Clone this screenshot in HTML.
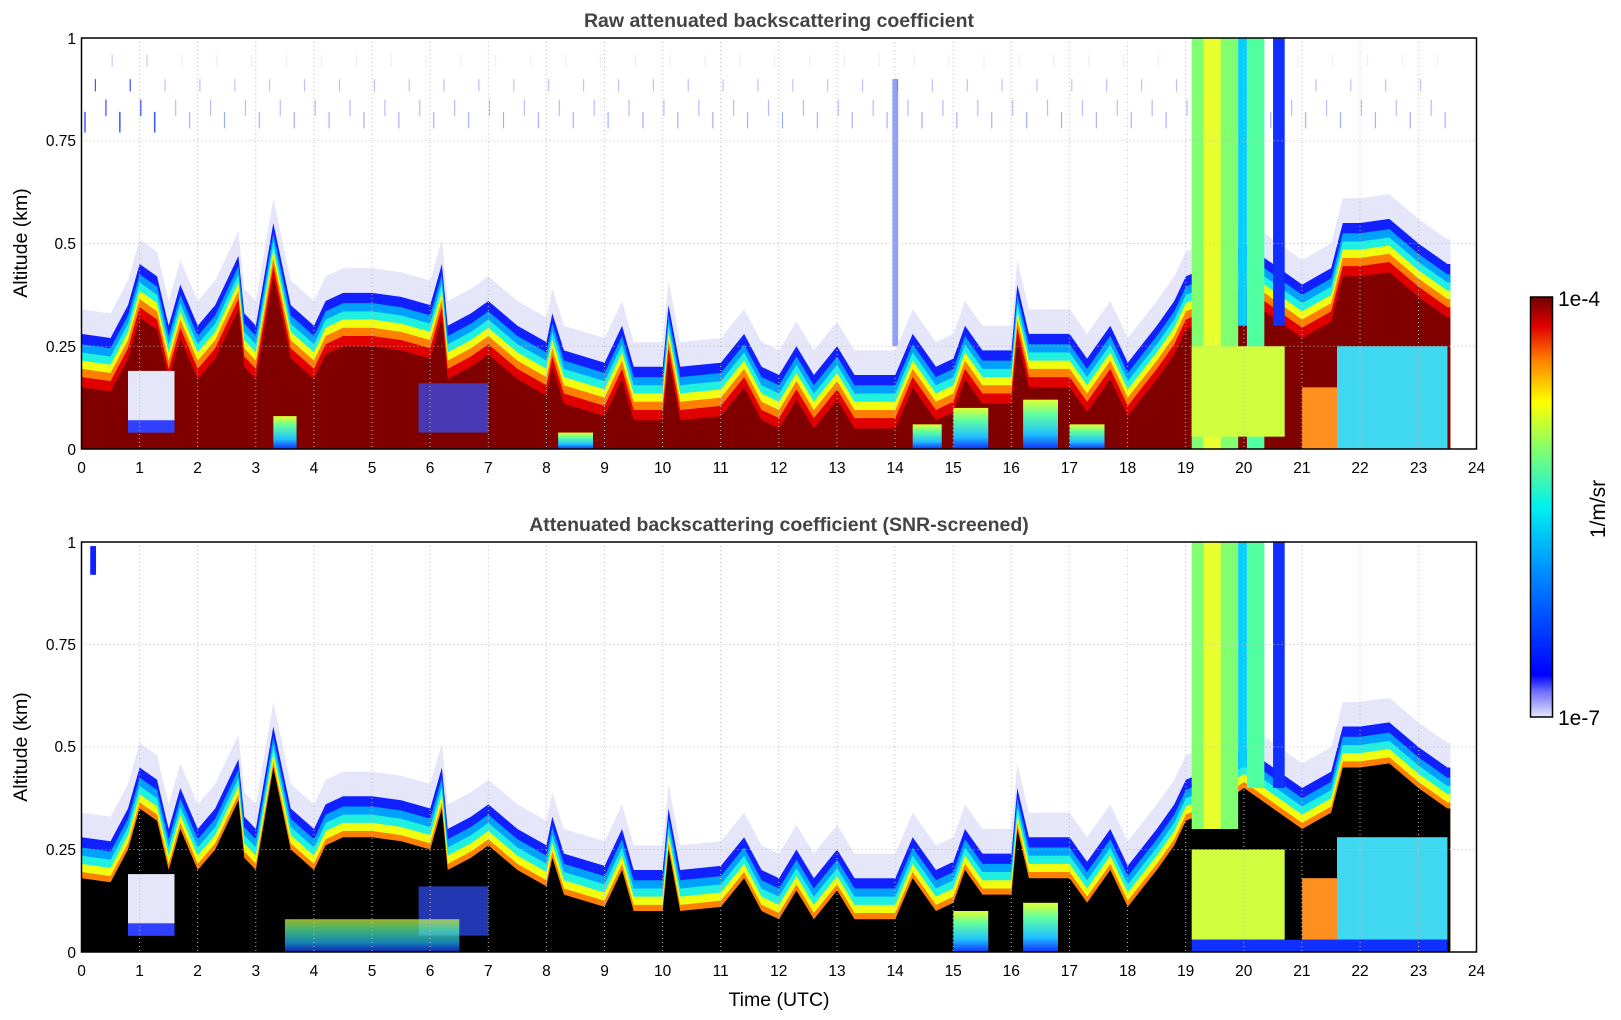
<!DOCTYPE html>
<html><head><meta charset="utf-8"><style>
html,body{margin:0;padding:0;background:#fff;overflow:hidden;width:1621px;height:1020px;}
svg{display:block;}
svg text{font-family:"Liberation Sans","DejaVu Sans",sans-serif;}
</style></head><body>
<svg width="1621" height="1020" xmlns="http://www.w3.org/2000/svg">
<defs>
<path id="prof" d="M0,-1 L0,0.28 L0.5,0.27 L0.8,0.35 L1,0.45 L1.3,0.42 L1.5,0.3 L1.7,0.4 L2,0.3 L2.3,0.35 L2.7,0.47 L2.8,0.33 L3,0.3 L3.3,0.55 L3.6,0.35 L4,0.3 L4.2,0.36 L4.5,0.38 L5,0.38 L5.5,0.37 L6,0.35 L6.2,0.45 L6.3,0.3 L6.7,0.33 L7,0.36 L7.5,0.3 L8,0.26 L8.1,0.33 L8.3,0.24 L9,0.21 L9.3,0.3 L9.5,0.2 L10,0.2 L10.1,0.35 L10.3,0.2 L11,0.21 L11.4,0.28 L11.7,0.2 L12,0.18 L12.3,0.25 L12.6,0.18 L13,0.25 L13.3,0.18 L14,0.18 L14.3,0.28 L14.7,0.2 L15,0.22 L15.2,0.3 L15.5,0.24 L16,0.24 L16.1,0.4 L16.3,0.28 L17,0.28 L17.3,0.22 L17.7,0.3 L18,0.21 L18.5,0.3 L18.8,0.36 L19,0.42 L19.5,0.45 L20,0.5 L20.5,0.45 L21,0.4 L21.5,0.44 L21.7,0.55 L22,0.55 L22.5,0.56 L23,0.5 L23.5,0.45 L23.55,0.45 L23.55,-1 Z"/>
<linearGradient id="cb" x1="0" y1="1" x2="0" y2="0">
<stop offset="0" stop-color="#e6e6fa"/><stop offset="0.06" stop-color="#7070ff"/><stop offset="0.1" stop-color="#0000ff"/>
<stop offset="0.35" stop-color="#0090ff"/><stop offset="0.5" stop-color="#00f0f0"/><stop offset="0.65" stop-color="#90ff60"/>
<stop offset="0.75" stop-color="#ffff00"/><stop offset="0.85" stop-color="#ff8000"/><stop offset="0.93" stop-color="#e00000"/><stop offset="1" stop-color="#700000"/>
</linearGradient>
<linearGradient id="bot" x1="0" y1="0" x2="0" y2="1">
<stop offset="0" stop-color="#1030ff"/><stop offset="0.3" stop-color="#20c0ff"/><stop offset="0.7" stop-color="#60ffa0"/><stop offset="1" stop-color="#e0ff30"/>
</linearGradient>
<pattern id="noise" width="0.6" height="0.25" patternUnits="userSpaceOnUse">
<rect x="0.05" y="0.02" width="0.02" height="0.05" fill="#1030ff"/>
<rect x="0.23" y="0.12" width="0.015" height="0.03" fill="#1030ff"/>
<rect x="0.41" y="0.06" width="0.02" height="0.04" fill="#4050ff"/>
<rect x="0.52" y="0.18" width="0.015" height="0.03" fill="#c0c0ff"/>
</pattern>
</defs>

<!-- TOP PLOT -->
<svg x="81.5" y="38" width="1395" height="411" viewBox="0 0 24 1" preserveAspectRatio="none" overflow="hidden">
<g transform="translate(0,1) scale(1,-1)">
<rect x="0" y="0.78" width="23.5" height="0.22" fill="url(#noise)" opacity="0.4"/>
<rect x="0" y="0.75" width="1.4" height="0.25" fill="url(#noise)"/>
<rect x="13.95" y="0.25" width="0.1" height="0.65" fill="#2040ff" opacity="0.5"/>
<use href="#prof" transform="translate(0,0.06)" fill="#e6e6fa"/>
<use href="#prof" fill="#1020ff"/>
<use href="#prof" transform="translate(0,-0.025)" fill="#00a0ff"/>
<use href="#prof" transform="translate(0,-0.045)" fill="#20f0e0"/>
<use href="#prof" transform="translate(0,-0.065)" fill="#f0ff10"/>
<use href="#prof" transform="translate(0,-0.085)" fill="#ff8000"/>
<use href="#prof" transform="translate(0,-0.105)" fill="#e00000"/>
<use href="#prof" transform="translate(0,-0.13)" fill="#800000"/>
<rect x="3.3" y="0" width="0.4" height="0.08" fill="url(#bot)"/>
<rect x="8.2" y="0" width="0.6" height="0.04" fill="url(#bot)"/>
<rect x="14.3" y="0" width="0.5" height="0.06" fill="url(#bot)"/>
<rect x="15" y="0" width="0.6" height="0.1" fill="url(#bot)"/>
<rect x="16.2" y="0" width="0.6" height="0.12" fill="url(#bot)"/>
<rect x="17" y="0" width="0.6" height="0.06" fill="url(#bot)"/>
<rect x="0.8" y="0.04" width="0.8" height="0.15" fill="#e6e6fa"/>
<rect x="0.8" y="0.04" width="0.8" height="0.03" fill="#3040ff"/>
<rect x="5.8" y="0.04" width="1.2" height="0.12" fill="#3050ff" opacity="0.7"/>
<rect x="19.1" y="0" width="0.8" height="1" fill="#80ff70"/>
<rect x="19.3" y="0" width="0.3" height="1" fill="#e8ff30"/>
<rect x="19.9" y="0.3" width="0.15" height="0.7" fill="#00d0ff"/>
<rect x="20.05" y="0" width="0.3" height="1" fill="#50ffa0"/>
<rect x="20.5" y="0.3" width="0.2" height="0.7" fill="#1030ff"/>
<rect x="19.1" y="0.03" width="1.6" height="0.22" fill="#d0ff40"/>
<rect x="21.6" y="0" width="1.9" height="0.25" fill="#40d8f0"/>
<rect x="21" y="0" width="0.6" height="0.15" fill="#ff9020"/>
</g>
</svg>

<!-- BOTTOM PLOT -->
<svg x="81.5" y="542" width="1395" height="410" viewBox="0 0 24 1" preserveAspectRatio="none" overflow="hidden">
<g transform="translate(0,1) scale(1,-1)">
<rect x="0.15" y="0.92" width="0.1" height="0.07" fill="#1020ff"/>
<use href="#prof" transform="translate(0,0.06)" fill="#e6e6fa"/>
<use href="#prof" fill="#1020ff"/>
<use href="#prof" transform="translate(0,-0.025)" fill="#00a0ff"/>
<use href="#prof" transform="translate(0,-0.045)" fill="#20f0e0"/>
<use href="#prof" transform="translate(0,-0.065)" fill="#f0ff10"/>
<use href="#prof" transform="translate(0,-0.085)" fill="#ff8000"/>
<use href="#prof" transform="translate(0,-0.1)" fill="#000"/>
<rect x="0.8" y="0.04" width="0.8" height="0.15" fill="#e6e6fa"/>
<rect x="0.8" y="0.04" width="0.8" height="0.03" fill="#3040ff"/>
<rect x="5.8" y="0.04" width="1.2" height="0.12" fill="#3050ff" opacity="0.7"/>
<rect x="3.5" y="0" width="3" height="0.08" fill="url(#bot)" opacity="0.7"/>
<rect x="15" y="0" width="0.6" height="0.1" fill="url(#bot)"/>
<rect x="16.2" y="0" width="0.6" height="0.12" fill="url(#bot)"/>
<rect x="19.1" y="0.3" width="0.8" height="0.7" fill="#80ff70"/>
<rect x="19.3" y="0.3" width="0.3" height="0.7" fill="#e8ff30"/>
<rect x="19.9" y="0.45" width="0.15" height="0.55" fill="#00d0ff"/>
<rect x="20.05" y="0.4" width="0.3" height="0.6" fill="#50ffa0"/>
<rect x="20.5" y="0.4" width="0.2" height="0.6" fill="#1030ff"/>
<rect x="19.1" y="0.03" width="1.6" height="0.22" fill="#d0ff40"/>
<rect x="21.6" y="0.03" width="1.9" height="0.25" fill="#40d8f0"/>
<rect x="21" y="0.03" width="0.6" height="0.15" fill="#ff9020"/>
<rect x="19.1" y="0" width="4.4" height="0.03" fill="#1030ff"/>
</g>
</svg>

<g stroke="#bbb" stroke-width="1" stroke-dasharray="1,3" fill="none">
<path d="M139.6,38V449M197.6,38V449M255.8,38V449M313.9,38V449M372,38V449M430.1,38V449M488.3,38V449M546.4,38V449M604.5,38V449M662.6,38V449M720.7,38V449M778.8,38V449M837,38V449M895.1,38V449M953.2,38V449M1011.3,38V449M1069.4,38V449M1127.6,38V449M1185.7,38V449M1243.8,38V449M1301.9,38V449M1360,38V449M1418.6,38V449"/>
<path d="M81.5,140.8H1476.5M81.5,243.5H1476.5M81.5,346.3H1476.5"/>
<path d="M139.6,542V952M197.6,542V952M255.8,542V952M313.9,542V952M372,542V952M430.1,542V952M488.3,542V952M546.4,542V952M604.5,542V952M662.6,542V952M720.7,542V952M778.8,542V952M837,542V952M895.1,542V952M953.2,542V952M1011.3,542V952M1069.4,542V952M1127.6,542V952M1185.7,542V952M1243.8,542V952M1301.9,542V952M1360,542V952M1418.6,542V952"/>
<path d="M81.5,644.5H1476.5M81.5,747H1476.5M81.5,849.5H1476.5"/>
</g>
<rect x="81.5" y="38" width="1395" height="411" fill="none" stroke="#000" stroke-width="1.5"/>
<rect x="81.5" y="542" width="1395" height="410" fill="none" stroke="#000" stroke-width="1.5"/>

<g font-size="15.5" fill="#000" text-anchor="middle">
<text x="81.5" y="473">0</text><text x="139.6" y="473">1</text><text x="197.6" y="473">2</text><text x="255.8" y="473">3</text><text x="313.9" y="473">4</text><text x="372" y="473">5</text><text x="430.1" y="473">6</text><text x="488.3" y="473">7</text><text x="546.4" y="473">8</text><text x="604.5" y="473">9</text><text x="662.6" y="473">10</text><text x="720.7" y="473">11</text><text x="778.8" y="473">12</text><text x="837" y="473">13</text><text x="895.1" y="473">14</text><text x="953.2" y="473">15</text><text x="1011.3" y="473">16</text><text x="1069.4" y="473">17</text><text x="1127.6" y="473">18</text><text x="1185.7" y="473">19</text><text x="1243.8" y="473">20</text><text x="1301.9" y="473">21</text><text x="1360" y="473">22</text><text x="1418.6" y="473">23</text><text x="1476.5" y="473">24</text>
<text x="81.5" y="976">0</text><text x="139.6" y="976">1</text><text x="197.6" y="976">2</text><text x="255.8" y="976">3</text><text x="313.9" y="976">4</text><text x="372" y="976">5</text><text x="430.1" y="976">6</text><text x="488.3" y="976">7</text><text x="546.4" y="976">8</text><text x="604.5" y="976">9</text><text x="662.6" y="976">10</text><text x="720.7" y="976">11</text><text x="778.8" y="976">12</text><text x="837" y="976">13</text><text x="895.1" y="976">14</text><text x="953.2" y="976">15</text><text x="1011.3" y="976">16</text><text x="1069.4" y="976">17</text><text x="1127.6" y="976">18</text><text x="1185.7" y="976">19</text><text x="1243.8" y="976">20</text><text x="1301.9" y="976">21</text><text x="1360" y="976">22</text><text x="1418.6" y="976">23</text><text x="1476.5" y="976">24</text>
</g>
<g font-size="15.5" fill="#000" text-anchor="end">
<text x="76" y="44">1</text><text x="76" y="146">0.75</text><text x="76" y="249">0.5</text><text x="76" y="352">0.25</text><text x="76" y="455">0</text>
<text x="76" y="548">1</text><text x="76" y="650">0.75</text><text x="76" y="752">0.5</text><text x="76" y="855">0.25</text><text x="76" y="958">0</text>
</g>
<g font-size="19.5" font-weight="bold" fill="#444" text-anchor="middle">
<text x="779" y="27">Raw attenuated backscattering coefficient</text>
<text x="779" y="531">Attenuated backscattering coefficient (SNR-screened)</text>
</g>
<text x="779" y="1006" font-size="19.5" text-anchor="middle">Time (UTC)</text>
<text transform="translate(27,243) rotate(-90)" font-size="19.5" text-anchor="middle">Altitude (km)</text>
<text transform="translate(27,747) rotate(-90)" font-size="19.5" text-anchor="middle">Altitude (km)</text>

<rect x="1530.5" y="297" width="22" height="420" fill="url(#cb)" stroke="#000" stroke-width="1.5"/>
<text x="1558" y="306" font-size="21">1e-4</text>
<text x="1558" y="725" font-size="21">1e-7</text>
<text transform="translate(1605,509) rotate(-90)" font-size="21" text-anchor="middle">1/m/sr</text>
</svg>
</body></html>
